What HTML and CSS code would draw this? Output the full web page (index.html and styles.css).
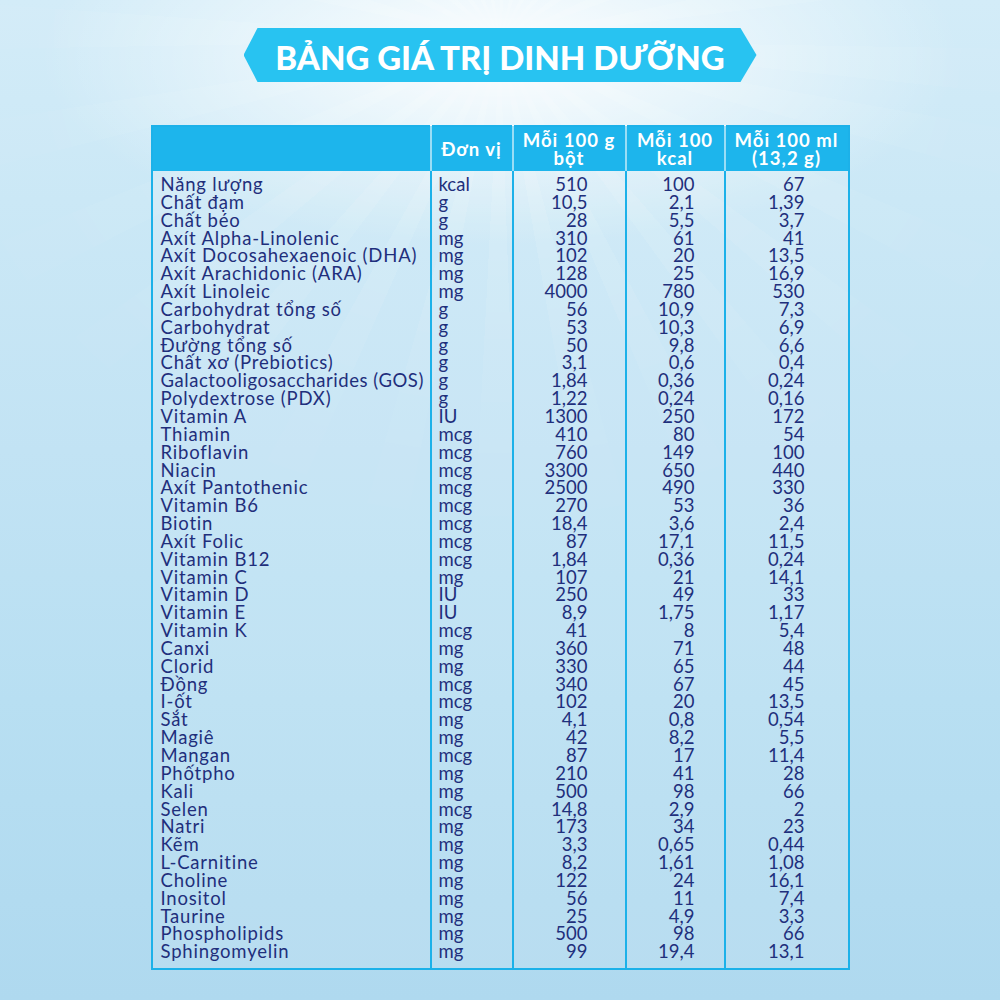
FILE: index.html
```html
<!DOCTYPE html>
<html lang="vi">
<head>
<meta charset="utf-8">
<title>Bảng giá trị dinh dưỡng</title>
<link rel="stylesheet" href="styles.css">
</head>
<body>
<div class="page">
  <div class="rays"></div>
  <h1 class="banner"><span>BẢNG GIÁ TRỊ DINH DƯỠNG</span></h1>
  <table class="nutri">
    <colgroup>
      <col class="c-name"><col class="c-unit"><col class="c-g"><col class="c-kcal"><col class="c-ml">
    </colgroup>
    <thead>
      <tr><th></th><th>Đơn vị</th><th>Mỗi 100 g<br>bột</th><th>Mỗi 100<br>kcal</th><th>Mỗi 100 ml<br>(13,2 g)</th></tr>
    </thead>
    <tbody>
      <tr><td>Năng lượng</td><td>kcal</td><td>510</td><td>100</td><td>67</td></tr>
      <tr><td>Chất đạm</td><td>g</td><td>10,5</td><td>2,1</td><td>1,39</td></tr>
      <tr><td>Chất béo</td><td>g</td><td>28</td><td>5,5</td><td>3,7</td></tr>
      <tr><td>Axít Alpha-Linolenic</td><td>mg</td><td>310</td><td>61</td><td>41</td></tr>
      <tr><td>Axít Docosahexaenoic (DHA)</td><td>mg</td><td>102</td><td>20</td><td>13,5</td></tr>
      <tr><td>Axít Arachidonic (ARA)</td><td>mg</td><td>128</td><td>25</td><td>16,9</td></tr>
      <tr><td>Axít Linoleic</td><td>mg</td><td>4000</td><td>780</td><td>530</td></tr>
      <tr><td>Carbohydrat tổng số</td><td>g</td><td>56</td><td>10,9</td><td>7,3</td></tr>
      <tr><td>Carbohydrat</td><td>g</td><td>53</td><td>10,3</td><td>6,9</td></tr>
      <tr><td>Đường tổng số</td><td>g</td><td>50</td><td>9,8</td><td>6,6</td></tr>
      <tr><td>Chất xơ (Prebiotics)</td><td>g</td><td>3,1</td><td>0,6</td><td>0,4</td></tr>
      <tr><td class="squeeze">Galactooligosaccharides (GOS)</td><td>g</td><td>1,84</td><td>0,36</td><td>0,24</td></tr>
      <tr><td>Polydextrose (PDX)</td><td>g</td><td>1,22</td><td>0,24</td><td>0,16</td></tr>
      <tr><td>Vitamin A</td><td>IU</td><td>1300</td><td>250</td><td>172</td></tr>
      <tr><td>Thiamin</td><td>mcg</td><td>410</td><td>80</td><td>54</td></tr>
      <tr><td>Riboflavin</td><td>mcg</td><td>760</td><td>149</td><td>100</td></tr>
      <tr><td>Niacin</td><td>mcg</td><td>3300</td><td>650</td><td>440</td></tr>
      <tr><td>Axít Pantothenic</td><td>mcg</td><td>2500</td><td>490</td><td>330</td></tr>
      <tr><td>Vitamin B6</td><td>mcg</td><td>270</td><td>53</td><td>36</td></tr>
      <tr><td>Biotin</td><td>mcg</td><td>18,4</td><td>3,6</td><td>2,4</td></tr>
      <tr><td>Axít Folic</td><td>mcg</td><td>87</td><td>17,1</td><td>11,5</td></tr>
      <tr><td>Vitamin B12</td><td>mcg</td><td>1,84</td><td>0,36</td><td>0,24</td></tr>
      <tr><td>Vitamin C</td><td>mg</td><td>107</td><td>21</td><td>14,1</td></tr>
      <tr><td>Vitamin D</td><td>IU</td><td>250</td><td>49</td><td>33</td></tr>
      <tr><td>Vitamin E</td><td>IU</td><td>8,9</td><td>1,75</td><td>1,17</td></tr>
      <tr><td>Vitamin K</td><td>mcg</td><td>41</td><td>8</td><td>5,4</td></tr>
      <tr><td>Canxi</td><td>mg</td><td>360</td><td>71</td><td>48</td></tr>
      <tr><td>Clorid</td><td>mg</td><td>330</td><td>65</td><td>44</td></tr>
      <tr><td>Đồng</td><td>mcg</td><td>340</td><td>67</td><td>45</td></tr>
      <tr><td>I-ốt</td><td>mcg</td><td>102</td><td>20</td><td>13,5</td></tr>
      <tr><td>Sắt</td><td>mg</td><td>4,1</td><td>0,8</td><td>0,54</td></tr>
      <tr><td>Magiê</td><td>mg</td><td>42</td><td>8,2</td><td>5,5</td></tr>
      <tr><td>Mangan</td><td>mcg</td><td>87</td><td>17</td><td>11,4</td></tr>
      <tr><td>Phốtpho</td><td>mg</td><td>210</td><td>41</td><td>28</td></tr>
      <tr><td>Kali</td><td>mg</td><td>500</td><td>98</td><td>66</td></tr>
      <tr><td>Selen</td><td>mcg</td><td>14,8</td><td>2,9</td><td>2</td></tr>
      <tr><td>Natri</td><td>mg</td><td>173</td><td>34</td><td>23</td></tr>
      <tr><td>Kẽm</td><td>mg</td><td>3,3</td><td>0,65</td><td>0,44</td></tr>
      <tr><td>L-Carnitine</td><td>mg</td><td>8,2</td><td>1,61</td><td>1,08</td></tr>
      <tr><td>Choline</td><td>mg</td><td>122</td><td>24</td><td>16,1</td></tr>
      <tr><td>Inositol</td><td>mg</td><td>56</td><td>11</td><td>7,4</td></tr>
      <tr><td>Taurine</td><td>mg</td><td>25</td><td>4,9</td><td>3,3</td></tr>
      <tr><td>Phospholipids</td><td>mg</td><td>500</td><td>98</td><td>66</td></tr>
      <tr><td>Sphingomyelin</td><td>mg</td><td>99</td><td>19,4</td><td>13,1</td></tr>
    </tbody>
  </table>
</div>
</body>
</html>
```
FILE: styles.css
```css
html, body {
  margin: 0;
  padding: 0;
}

body {
  font-family: Lato, "Liberation Sans", sans-serif;
}

.page {
  position: relative;
  width: 1000px;
  height: 1000px;
  box-sizing: border-box;
  padding-top: 28px;
  overflow: hidden;
  background:
    radial-gradient(ellipse 460px 190px at 50% 55px, rgba(255, 255, 255, 0.95), rgba(255, 255, 255, 0) 100%),
    linear-gradient(180deg, #d3ecf8 0%, #cbe8f6 20%, #c2e3f4 45%, #b8dff2 70%, #afd9ef 100%);
}

.rays {
  position: absolute;
  inset: 0;
  background: repeating-conic-gradient(from 100deg at 50% 40px,
    rgba(255, 255, 255, 0.16) 0deg 5deg,
    rgba(255, 255, 255, 0) 5deg 13deg);
  -webkit-mask-image: radial-gradient(ellipse 620px 520px at 50% 40px, #000 0%, rgba(0, 0, 0, 0) 100%);
  mask-image: radial-gradient(ellipse 620px 520px at 50% 40px, #000 0%, rgba(0, 0, 0, 0) 100%);
  pointer-events: none;
}

.banner {
  position: relative;
  width: 513px;
  height: 54px;
  margin: 0 auto;
  background: #28c3f1;
  clip-path: polygon(14px 0, calc(100% - 16px) 0, 100% 50%, calc(100% - 16px) 100%, 14px 100%, 0 50%);
  display: flex;
  align-items: center;
  justify-content: center;
  color: #ffffff;
  font-family: Lato, "Liberation Sans", sans-serif;
  font-weight: 900;
  font-size: 33px;
  letter-spacing: 0;
  line-height: 1;
}

.banner span {
  padding-top: 4px;
}

.nutri {
  position: relative;
  margin: 43px auto 0;
  width: 697px;
  table-layout: fixed;
  border-collapse: collapse;
  border: 2px solid #1cb1e9;
  background: rgba(255, 255, 255, 0.1);
}

.c-name { width: 279px; }
.c-unit { width: 82px; }
.c-g { width: 113px; }
.c-kcal { width: 99px; }
.c-ml { width: 124px; }

.nutri th {
  height: 44px;
  padding: 0;
  background: #1db5ec;
  color: #ffffff;
  font-weight: 700;
  font-size: 18.5px;
  letter-spacing: 1px;
  line-height: 18px;
  text-align: center;
  vertical-align: middle;
  border-left: 2px solid rgba(255, 255, 255, 0.55);
}

.nutri th:first-child {
  border-left: none;
}

.nutri td {
  padding: 0;
  font-size: 18.5px;
  line-height: 17.84px;
  color: #1f2f7c;
  white-space: nowrap;
  border-left: 2px solid #1cb1e9;
}

.nutri td:nth-child(1) {
  padding-left: 8px;
  letter-spacing: 0.8px;
}

.nutri td.squeeze {
  letter-spacing: 0.55px;
}

.nutri td:nth-child(2) {
  padding-left: 7px;
}

.nutri td:nth-child(3),
.nutri td:nth-child(4),
.nutri td:nth-child(5) {
  text-align: right;
}

.nutri td:nth-child(3) { padding-right: 37px; }
.nutri td:nth-child(4) { padding-right: 29px; }
.nutri td:nth-child(5) { padding-right: 43px; }

.nutri tbody tr:first-child td {
  padding-top: 5px;
}

.nutri tbody tr:last-child td {
  padding-bottom: 7px;
}
```
